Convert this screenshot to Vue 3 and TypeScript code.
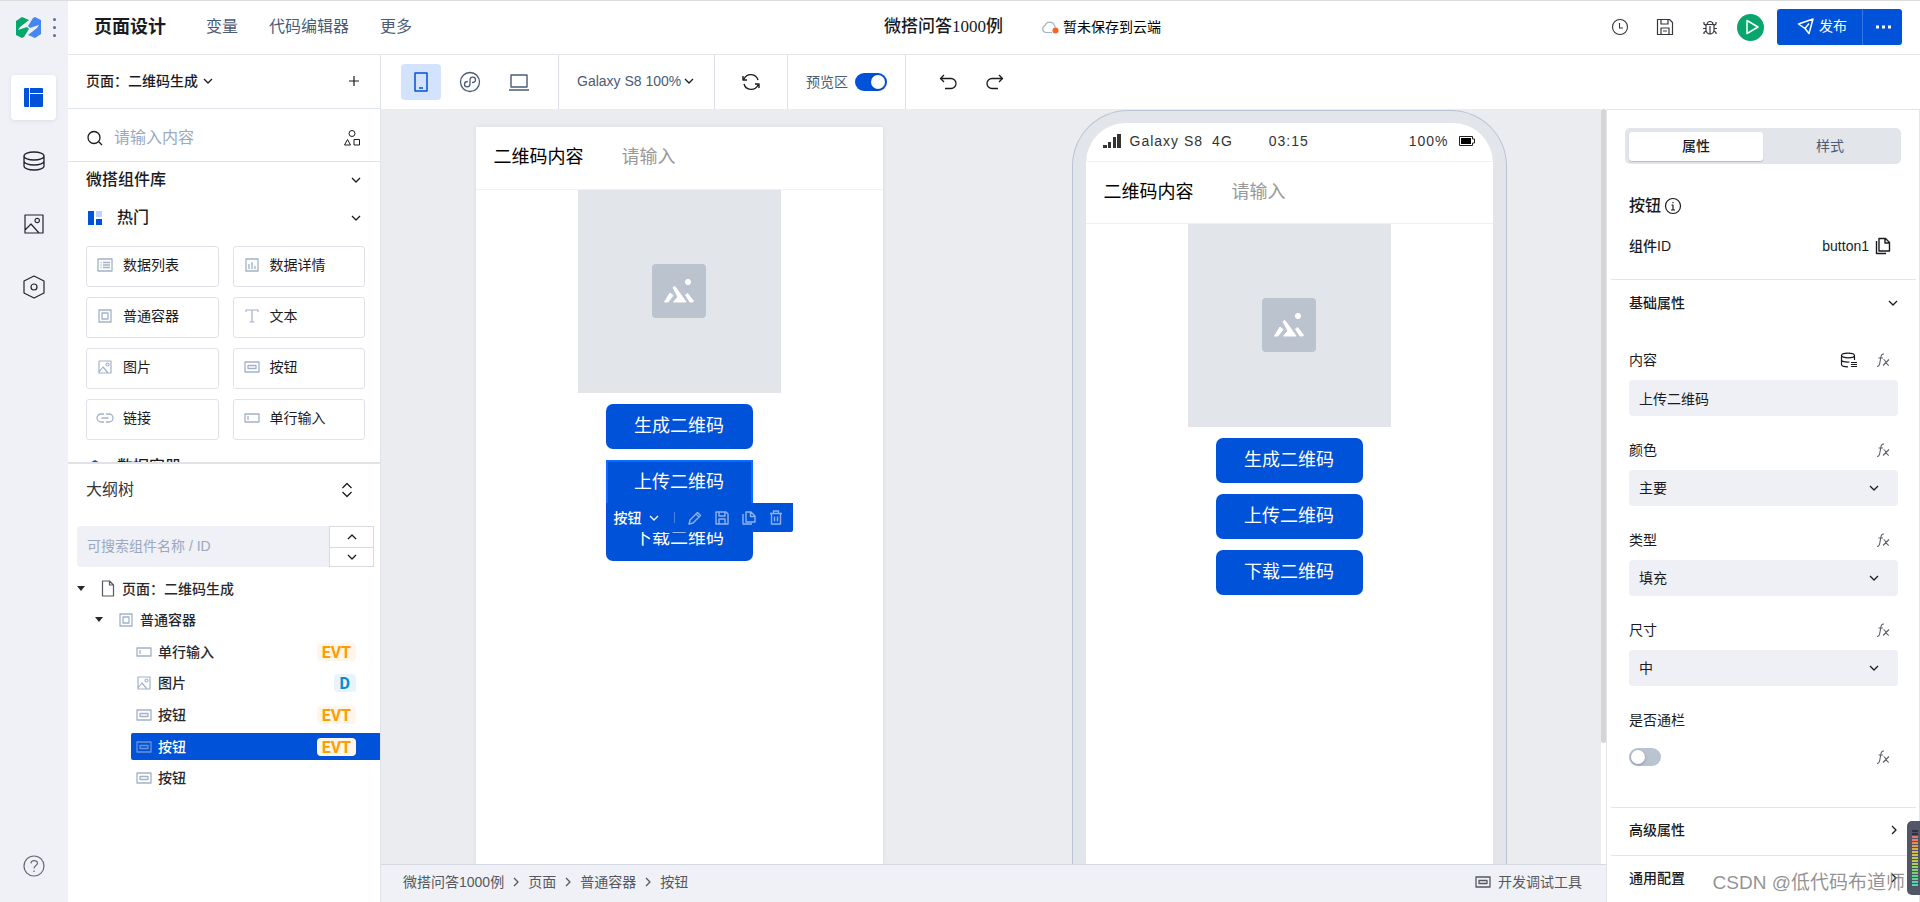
<script setup lang="ts">
import { h, ref } from 'vue'
import type { FunctionalComponent } from 'vue'

type Glyph = { w: number; h: number; d: string; fill?: string; sw?: number }

const glyphs: Record<string, Glyph> = {
  down: { w: 10, h: 8, d: 'M1 2l4 4 4-4', sw: 1.3 },
  up: { w: 10, h: 8, d: 'M1 6l4-4 4 4', sw: 1.3 },
  right: { w: 8, h: 10, d: 'M2 1l4 4-4 4', sw: 1.3 },
  plus: { w: 12, h: 12, d: 'M6 1v10M1 6h10', sw: 1.2 },
  database: {
    w: 22, h: 22, sw: 1.3,
    d: 'M1 6c0-2.300 4.500-4 10-4s10 1.700 10 4-4.500 4-10 4-10-1.700-10-4zM1 6v10c0 2.300 4.500 4 10 4s10-1.700 10-4V6M1 11c0 2.300 4.500 4 10 4s10-1.700 10-4',
  },
  picture: { w: 20, h: 20, d: 'M1 1h18v18H1zM1 16l6-6 8 9M11 6.500a2.200 2.200 0 1 0 4.400 0a2.200 2.200 0 1 0-4.400 0M15 19h4v-2', sw: 1.2 },
  hexagon: { w: 22, h: 24, d: 'M11 1l10 5v12l-10 5-10-5V6zM8 12a3 3 0 1 0 6 0a3 3 0 1 0-6 0', sw: 1.2 },
  help: { w: 22, h: 22, d: 'M1 11a10 10 0 1 0 20 0a10 10 0 1 0-20 0M8 8.500c0-4 6.500-3.800 6.500-.3C14.500 10.500 11 10.500 11 13.500M11 15.500v1.500', sw: 1.2 },
  search: { w: 16, h: 16, d: 'M1 7.500a6 6 0 1 0 12 0a6 6 0 1 0-12 0M11.500 11.500L15 15', sw: 1.3 },
  shapes: { w: 18, h: 18, d: 'M6 4.500a3 3 0 1 0 6 0a3 3 0 1 0-6 0M1.500 16L4.500 10.500L7.500 16zM11 10.500h5.500V16H11z', sw: 1 },
  list: { w: 16, h: 14, d: 'M1 1h14v12H1zM3.500 4.500h1M3.500 7h1M3.500 9.500h1M6 4.500h7M6 7h7M6 9.500h7', sw: 1.3 },
  chart: { w: 14, h: 14, d: 'M1 1h12v12H1zM4 6v5M7 4v7M10 8v3', sw: 1.3 },
  box: { w: 14, h: 14, d: 'M1 1h12v12H1zM4 4h6v6H4z', sw: 1.3 },
  text: { w: 14, h: 14, d: 'M1 3V1h12v2M7 1v12M4.500 13h5', sw: 1.2 },
  image: { w: 14, h: 14, d: 'M1 1h12v12H1zM1 12l4-5 5 6M8 4.500a1.500 1.500 0 1 0 3 0a1.500 1.500 0 1 0-3 0', sw: 1.2 },
  button: { w: 16, h: 12, d: 'M1 1h14v10H1zM4 4.500h8v3H4z', sw: 1.3 },
  link: { w: 18, h: 12, d: 'M8 2H5a4 4 0 0 0 0 8h3M10 2h3a4 4 0 0 1 0 8h-3M5.500 6h7', sw: 1.3 },
  field: { w: 16, h: 10, d: 'M1 1h14v8H1zM4 3v4', sw: 1.3 },
  updown: { w: 12, h: 16, d: 'M1.500 6L6 1.500L10.500 6M1.500 10L6 14.500L10.500 10', sw: 1.3 },
  file: { w: 14, h: 17, d: 'M1.500 1h7l4 4v11h-11zM8.500 1v4h4', sw: 1.2 },
  caret: { w: 10, h: 6, d: 'M1 0h8L5 5z', fill: 'currentColor', sw: 0 },
  phone: { w: 14, h: 20, d: 'M1 1h12v18H1zM5 16h4', sw: 1.5 },
  mini: { w: 22, h: 22, d: 'M1.500 11a9.500 9.500 0 1 0 19 0a9.500 9.500 0 1 0-19 0M13 11.500c3 0 3.500-1.700 3.500-2.700 0-1.600-1.200-2.600-2.700-2.600S11 7.300 11 9v4c0 1.700-1.200 2.800-2.800 2.800S5.500 14.800 5.500 13.200c0-1 .7-2.700 3.300-2.700', sw: 1.3 },
  laptop: { w: 20, h: 17, d: 'M2 1h16v12H2zM0 16h20', sw: 1.4 },
  refresh: { w: 20, h: 20, d: 'M3 7a7.500 7.500 0 0 1 14 1M17 13a7.500 7.500 0 0 1-14-1M2 4v4h4M18 16v-4h-4', sw: 1.4 },
  undo: { w: 18, h: 16, d: 'M5 1L1.500 4.500L5 8M1.500 4.500H12a5 5 0 0 1 0 10H6', sw: 1.3 },
  redo: { w: 18, h: 16, d: 'M13 1l3.500 3.500L13 8M16.500 4.500H6a5 5 0 0 0 0 10h6', sw: 1.3 },
  clock: { w: 18, h: 18, d: 'M1.500 9a7.500 7.500 0 1 0 15 0a7.500 7.500 0 1 0-15 0M8.500 5v5H12', sw: 1.1 },
  save: { w: 18, h: 18, d: 'M1.500 1.500h12l3 3v12h-15zM5 1.500V6h7V1.500M5 16.500V10h8v6.500M7 13h4', sw: 1.2 },
  bug: { w: 16, h: 18, d: 'M4 6.500h8V12a4 4 0 0 1-8 0zM5 6.500a3 3 0 0 1 6 0M8 8v8M4 7.500L2 6V4M12 7.500L14 6V4M4 10.500H1M12 10.500h3M4 13l-2 1.500V16M12 13l2 1.500V16', sw: 1.2 },
  play: { w: 14, h: 16, d: 'M2 1.500l11 6.500-11 6.500z', sw: 1.5 },
  plane: { w: 18, h: 18, d: 'M1.500 7L16 2l-4 14.500-4-5zM8 11.500L12 6.500M1.500 7L8 11.500', sw: 1.5 },
  more: { w: 16, h: 4, d: 'M1 .500h3v3H1zM7 .500h3v3H7zM13 .500h3v3h-3z', fill: 'currentColor', sw: 0 },
  info: { w: 18, h: 18, d: 'M1.500 9a7.500 7.500 0 1 0 15 0a7.500 7.500 0 1 0-15 0M9 5v1.200M7.500 8H9v5M7 13h4', sw: 1.2 },
  copy: { w: 16, h: 18, d: 'M4 1.500h6.500l4 4V14H4zM10 1.500V6h4.500M1.500 4v12.500H11', sw: 1.4 },
  duplicate: { w: 14, h: 14, d: 'M4 1h5l4 4v6H4zM8.500 1v4.500H13M1 3v10h9', sw: 1.4 },
  dataset: { w: 18, h: 16, d: 'M1.500 3.500c0-1.300 3-2.300 6.500-2.300s6.500 1 6.500 2.300-3 2.300-6.500 2.300-6.500-1-6.500-2.300zM1.500 3.500v9c0 1.400 3 2.300 6.500 2.300M14.500 3.500V8M1.500 8c0 1.300 3 2.300 8 2M11 10.500h6M11 12.500h6M11 14.500h6', sw: 1.2 },
  fx: { w: 14, h: 16, d: 'M1 14.500c1.700 0 2.200-.6 2.600-2.500L5 4.500C5.400 2.500 6 1.800 8 2M2.500 6h4.500M7.500 7.500c2 0 3 6 5.500 6M13 7.500L7 13.500', sw: 1.1 },
  pencil: { w: 14, h: 14, d: 'M2 9l7.500-7.500 3 3L5 12l-4 1zM8 3l3 3', sw: 1.4 },
  disk: { w: 14, h: 14, d: 'M1 1h10l2 2v10H1zM4 1v4h6V1M4 13V8h6v5', sw: 1.4 },
  trash: { w: 14, h: 15, d: 'M1 3.500h12M4.500 3.500V1h5v2.500M2.500 3.500V14h9V3.500M5.500 6.500v5M8.500 6.500v5', sw: 1.4 },
}

const Icon: FunctionalComponent<{ n: string }> = (p) => {
  const g = glyphs[p.n]
  return h(
    'svg',
    {
      width: g.w, height: g.h, viewBox: `0 0 ${g.w} ${g.h}`, 'aria-hidden': 'true',
      fill: g.fill ?? 'none', stroke: 'currentColor', 'stroke-width': g.sw ?? 1.2, 'stroke-linejoin': 'round',
    },
    [h('path', { d: g.d })],
  )
}
Icon.props = ['n']

const menus = ['变量', '代码编辑器', '更多']
const components = [
  { icon: 'list', name: '数据列表' },
  { icon: 'chart', name: '数据详情' },
  { icon: 'box', name: '普通容器' },
  { icon: 'text', name: '文本' },
  { icon: 'image', name: '图片' },
  { icon: 'button', name: '按钮' },
  { icon: 'link', name: '链接' },
  { icon: 'field', name: '单行输入' },
]
const tree = [
  { level: 0, icon: 'file', name: '页面：二维码生成', open: true, tag: '' },
  { level: 1, icon: 'box', name: '普通容器', open: true, tag: '' },
  { level: 2, icon: 'field', name: '单行输入', open: false, tag: 'EVT' },
  { level: 2, icon: 'image', name: '图片', open: false, tag: 'D' },
  { level: 2, icon: 'button', name: '按钮', open: false, tag: 'EVT' },
  { level: 2, icon: 'button', name: '按钮', open: false, tag: 'EVT' },
  { level: 2, icon: 'button', name: '按钮', open: false, tag: '' },
]
const selected = ref(5)
const crumbs = ['微搭问答1000例', '页面', '普通容器', '按钮']
const actions = ['生成二维码', '上传二维码', '下载二维码']
const selects = [
  { id: 'color', label: '颜色', value: '主要' },
  { id: 'kind', label: '类型', value: '填充' },
  { id: 'size', label: '尺寸', value: '中' },
]
const content = ref('上传二维码')
const preview = ref(true)
const block = ref(false)
</script>

<template>
  <div class="app">
    <aside class="rail">
      <div class="brand">
        <svg width="25" height="21" viewBox="0 0 25 21" aria-hidden="true">
          <path d="M0 4L6 0l7 3-9 7-2 3 9-3 2 2-5 8-2 1-6-3z" fill="#07a66d" />
          <path d="M25 17l-6 4-7-3 9-7 2-3-9 3-2-2 5-8 2-1 6 3z" fill="#4587f0" />
        </svg>
        <button class="dots" aria-label="菜单"><i></i><i></i><i></i></button>
      </div>
      <nav class="rail-nav">
        <button class="rail-item active" aria-label="页面">
          <svg width="20" height="20" viewBox="0 0 20 20" aria-hidden="true">
            <path d="M1 0h4v19H1a1 1 0 0 1-1-1V1a1 1 0 0 1 1-1zM6 0h12a1 1 0 0 1 1 1v4H6zM6 6h13v12a1 1 0 0 1-1 1H6z" fill="#0052d9" />
          </svg>
        </button>
        <button class="rail-item" aria-label="数据"><Icon n="database" /></button>
        <button class="rail-item" aria-label="素材"><Icon n="picture" /></button>
        <button class="rail-item" aria-label="设置"><Icon n="hexagon" /></button>
      </nav>
      <button class="rail-help" aria-label="帮助"><Icon n="help" /></button>
    </aside>

    <header class="header">
      <div class="header-left">
        <h1>页面设计</h1>
        <nav class="menu"><a v-for="m in menus" :key="m" href="#">{{ m }}</a></nav>
      </div>
      <div class="header-mid">
        <span class="project">微搭问答1000例</span>
        <span class="cloud">
          <svg width="18" height="14" viewBox="0 0 18 14" aria-hidden="true">
            <path d="M11 12.500H4.500a3.700 3.700 0 0 1-.5-7 5 5 0 0 1 9.500 0l1 2" fill="none" stroke="#a3b1cb" stroke-width="1.200" />
            <circle cx="14.500" cy="10.500" r="3" fill="#f26522" />
          </svg>
          暂未保存到云端
        </span>
      </div>
      <div class="header-right">
        <button class="tool" aria-label="历史"><Icon n="clock" /></button>
        <button class="tool" aria-label="保存"><Icon n="save" /></button>
        <button class="tool" aria-label="调试"><Icon n="bug" /></button>
        <button class="run" aria-label="运行"><Icon n="play" /></button>
        <div class="publish">
          <button class="publish-main"><Icon n="plane" />发布</button>
          <button class="publish-more" aria-label="更多发布选项"><Icon n="more" /></button>
        </div>
      </div>
    </header>

    <section class="left">
      <div class="page-bar">
        <button class="page-name">页面：二维码生成<Icon n="down" /></button>
        <button class="ghost" aria-label="新建"><Icon n="plus" /></button>
      </div>
      <div class="search">
        <Icon n="search" />
        <input type="text" placeholder="请输入内容" aria-label="搜索组件" />
        <Icon n="shapes" />
      </div>
      <div class="library">
        <button class="lib-head">微搭组件库<Icon n="down" /></button>
        <button class="lib-group">
          <svg width="14" height="14" viewBox="0 0 14 14" aria-hidden="true">
            <path d="M0 0h6v14H0zM8 8h6v6H8z" fill="#0052d9" /><path d="M8 0h6v6H8z" fill="#bcd3fb" />
          </svg>
          <span>热门</span><Icon n="down" />
        </button>
        <div class="cards">
          <button v-for="c in components" :key="c.name" class="card">
            <span class="card-icon"><Icon :n="c.icon" /></span>{{ c.name }}
          </button>
        </div>
        <button class="lib-group">
          <svg width="14" height="14" viewBox="0 0 14 14" aria-hidden="true">
            <path d="M7 0l7 4-7 4-7-4z" fill="#0052d9" /><path d="M0 7l7 4 7-4v3l-7 4-7-4z" fill="#bcd3fb" />
          </svg>
          <span>数据容器</span><Icon n="down" />
        </button>
      </div>
      <div class="outline">
        <div class="outline-head"><h2>大纲树</h2><button class="ghost" aria-label="展开"><Icon n="updown" /></button></div>
        <div class="outline-search">
          <input type="text" placeholder="可搜索组件名称 / ID" aria-label="搜索大纲" />
          <div class="stepper">
            <button aria-label="上一个"><Icon n="up" /></button>
            <button aria-label="下一个"><Icon n="down" /></button>
          </div>
        </div>
        <ul class="tree">
          <li v-for="(t, i) in tree" :key="i" :class="['lv' + t.level, { on: i === selected }]">
            <button class="node" @click="selected = i">
              <Icon v-if="t.open" n="caret" class="caret" />
              <span class="node-icon"><Icon :n="t.icon" /></span>
              <span class="node-name">{{ t.name }}</span>
              <span v-if="t.tag" :class="['tag', t.tag === 'D' ? 'tag-d' : 'tag-evt']">{{ t.tag }}</span>
            </button>
          </li>
        </ul>
      </div>
    </section>

    <div class="toolbar">
      <div class="group devices">
        <button class="device active" aria-label="手机"><Icon n="phone" /></button>
        <button class="device" aria-label="小程序"><Icon n="mini" /></button>
        <button class="device" aria-label="电脑"><Icon n="laptop" /></button>
      </div>
      <div class="group model"><button>Galaxy S8 100%<Icon n="down" /></button></div>
      <div class="group reload"><button class="ghost" aria-label="刷新"><Icon n="refresh" /></button></div>
      <label class="group preview">预览区<input v-model="preview" class="switch" type="checkbox" /></label>
      <div class="group history">
        <button class="ghost" aria-label="撤销"><Icon n="undo" /></button>
        <button class="ghost" aria-label="重做"><Icon n="redo" /></button>
      </div>
    </div>

    <main class="stage">
      <div class="canvas">
        <div class="frame">
          <div class="form-row"><label for="qr-edit">二维码内容</label><input id="qr-edit" type="text" placeholder="请输入" /></div>
          <div class="placeholder">
            <svg width="54" height="54" viewBox="0 0 54 54" aria-hidden="true">
              <rect width="54" height="54" rx="4" fill="#bbc3cf" />
              <g fill="#fff" stroke="#fff" stroke-width="1" stroke-linejoin="round">
                <circle cx="36" cy="18" r="2.600" /><path d="M12.500 38l5.500-9 3 2.500-5 6.500h-3zM21 23.500l2-1 11 15.500H21.500l4.500-5zM33.500 31l2-1.500 6 7.500-1 1h-2.500z" />
              </g>
            </svg>
          </div>
          <div class="actions">
            <div v-for="(a, i) in actions" :key="a" :class="['slot', { picked: i === 1 }]">
              <button class="primary">{{ a }}</button>
              <div v-if="i === 1" class="float-bar">
                <button class="float-name">按钮<Icon n="down" /></button>
                <i class="bar-sep"></i>
                <button aria-label="编辑"><Icon n="pencil" /></button>
                <button aria-label="保存组件"><Icon n="disk" /></button>
                <button aria-label="复制组件"><Icon n="duplicate" /></button>
                <button aria-label="删除组件"><Icon n="trash" /></button>
              </div>
            </div>
          </div>
        </div>
        <div class="device-shell">
          <div class="screen">
            <div class="status">
              <svg width="18" height="14" viewBox="0 0 18 14" aria-hidden="true"><path d="M0 11h4v3H0zM5 8h3v6H5zM10 3h3v11h-3zM14 0h4v14h-4z" fill="#333" /></svg>
              <span class="carrier">Galaxy S8</span><span>4G</span><span class="time">03:15</span>
              <span class="power">100%</span>
              <svg width="16" height="10" viewBox="0 0 16 10" aria-hidden="true"><path d="M.500.500h13V3H15.500v4h-2v2.500H.500z" fill="#fff" stroke="#222" /><path d="M2 2h10v6H2z" /></svg>
            </div>
            <div class="form-row"><label for="qr-live">二维码内容</label><input id="qr-live" type="text" placeholder="请输入" /></div>
            <div class="placeholder">
              <svg width="54" height="54" viewBox="0 0 54 54" aria-hidden="true">
                <rect width="54" height="54" rx="4" fill="#bbc3cf" />
                <g fill="#fff" stroke="#fff" stroke-width="1" stroke-linejoin="round">
                  <circle cx="36" cy="18" r="2.600" /><path d="M12.500 38l5.500-9 3 2.500-5 6.500h-3zM21 23.500l2-1 11 15.500H21.500l4.500-5zM33.500 31l2-1.500 6 7.500-1 1h-2.500z" />
                </g>
              </svg>
            </div>
            <div class="actions"><button v-for="a in actions" :key="a" class="primary">{{ a }}</button></div>
          </div>
        </div>
      </div>
      <div class="track"><div class="thumb"></div></div>
      <footer class="footer">
        <nav class="crumbs">
          <template v-for="(c, i) in crumbs" :key="c"><Icon v-if="i" n="right" /><a href="#">{{ c }}</a></template>
        </nav>
        <button class="devtools"><Icon n="button" />开发调试工具</button>
      </footer>
    </main>

    <aside class="right">
      <div class="tabs" role="tablist">
        <button role="tab" aria-selected="true" class="tab active">属性</button>
        <button role="tab" aria-selected="false" class="tab">样式</button>
      </div>
      <div class="widget">
        <h2>按钮<Icon n="info" /></h2>
        <div class="widget-id"><strong>组件ID</strong><span>button1</span><button class="ghost" aria-label="复制ID"><Icon n="copy" /></button></div>
      </div>
      <button class="fold">基础属性<Icon n="down" /></button>
      <div class="fields">
        <div class="field">
          <div class="field-head"><label for="content">内容</label><button class="ghost" aria-label="绑定数据"><Icon n="dataset" /></button><button class="ghost fx" aria-label="表达式"><Icon n="fx" /></button></div>
          <input id="content" v-model="content" class="control" type="text" />
        </div>
        <div v-for="s in selects" :key="s.id" class="field">
          <div class="field-head"><label :for="s.id">{{ s.label }}</label><button class="ghost fx" aria-label="表达式"><Icon n="fx" /></button></div>
          <div class="select-wrap"><select :id="s.id" class="control"><option>{{ s.value }}</option></select><Icon n="down" /></div>
        </div>
        <div class="field">
          <div class="field-head"><label for="block">是否通栏</label></div>
          <div class="toggle-row"><input id="block" v-model="block" class="switch" type="checkbox" /><button class="ghost fx" aria-label="表达式"><Icon n="fx" /></button></div>
        </div>
      </div>
      <button class="fold closed">高级属性<Icon n="right" /></button>
      <button class="fold closed">通用配置<Icon n="right" /></button>
    </aside>

    <div class="watermark">CSDN @低代码布道师</div>
    <div class="meter"><div class="meter-scale"></div></div>
  </div>
</template>

<style>
body { margin: 0; }
</style>

<style scoped>
.app {
  position: relative;
  display: grid;
  grid-template-columns: 68px 313px minmax(0, 1fr) 314px;
  grid-template-rows: 55px 54px minmax(0, 1fr);
  height: 100vh;
  overflow: hidden;
  box-sizing: border-box;
  background: #fff;
  color: #191b1f;
  font: 14px/20px "Liberation Sans", "Noto Sans CJK SC", sans-serif;
}
.app *, .app *::before { box-sizing: border-box; }
.app svg { flex: none; display: block; }
button { border: 0; background: none; padding: 0; margin: 0; font: inherit; color: inherit; display: flex; align-items: center; cursor: pointer; }
input, select { font: inherit; color: inherit; border: 0; outline: 0; background: none; padding: 0; margin: 0; min-width: 0; border-radius: 0; }
a { color: inherit; text-decoration: none; }
h1, h2, ul { margin: 0; padding: 0; list-style: none; font-weight: 500; }
.ghost { justify-content: center; }

.rail { grid-row: 1 / -1; display: flex; flex-direction: column; align-items: center; padding-right: 1px; background: #eff1f6; border-top: 1px solid #dcdcdc; }
.brand { display: flex; align-items: center; gap: 12px; height: 55px; padding: 0 0 2px 4px; }
.dots { flex-direction: column; gap: 5px; }
.dots i { width: 3px; height: 3px; border-radius: 2px; background: #5a6b8c; }
.rail-nav { display: flex; flex-direction: column; gap: 18px; margin-top: 19px; }
.rail-item { width: 45px; height: 45px; justify-content: center; border-radius: 4px; color: #22252b; }
.rail-item.active { background: #fff; box-shadow: 0 1px 4px rgba(30, 50, 90, 0.1); }
.rail-help { margin-top: auto; margin-bottom: 25px; color: #666a70; }

.header { grid-column: 2 / -1; display: grid; grid-template-columns: 1fr auto 1fr; align-items: center; border-top: 1px solid #dcdcdc; border-bottom: 1px solid #e4e6ec; padding-bottom: 1px; }
.header-left { display: flex; align-items: center; padding-left: 26px; }
h1 { font-size: 18px; line-height: 24px; font-weight: 700; }
.menu { display: flex; gap: 31px; margin-left: 40px; font-size: 16px; color: #4b5b76; }
.header-mid { display: flex; align-items: center; gap: 38px; margin-left: 57px; }
.project { font-family: "Liberation Serif", "Noto Sans CJK SC", serif; font-size: 17px; font-weight: 500; }
.cloud { display: flex; align-items: center; gap: 4px; color: #000; }
.header-right { display: flex; align-items: center; justify-content: flex-end; padding-right: 18px; }
.tool { width: 45px; justify-content: center; color: #33363c; }
.run { width: 27px; height: 27px; justify-content: center; border-radius: 50%; background: #07a66d; color: #fff; margin-left: 5px; padding-left: 3px; }
.publish { display: flex; height: 36px; margin-left: 13px; border-radius: 3px; overflow: hidden; background: #0052d9; color: #fff; }
.publish-main { width: 86px; gap: 4px; padding: 0 0 2px 20px; border-right: 1px solid #3876e0; }
.publish-more { width: 39px; justify-content: center; }

.left { grid-column: 2; grid-row: 2 / -1; display: flex; flex-direction: column; border-right: 1px solid #e0e3e9; min-height: 0; }
.page-bar { display: flex; align-items: center; justify-content: space-between; height: 54px; padding: 0 20px 2px 18px; border-bottom: 1px solid #e0e3e9; }
.page-name { gap: 5px; font-weight: 500; }
.search { display: flex; align-items: center; height: 53px; padding: 5px 19px 0 19px; border-bottom: 1px solid #e0e3e9; }
.search input { flex: 1; margin-left: 11px; font-size: 16px; }
.search input::placeholder, .outline-search input::placeholder { color: #9aa8c0; opacity: 1; }
.library { height: 300px; overflow: hidden; padding: 0 15px 0 18px; }
.lib-head { width: 100%; justify-content: space-between; height: 35px; padding-right: 4px; font-size: 16px; font-weight: 500; }
.lib-group { width: 100%; height: 41px; padding: 0 4px 0 2px; font-size: 16px; font-weight: 500; }
.lib-group span { flex: 1; text-align: left; padding-left: 15px; }
.cards { display: grid; grid-template-columns: 1fr 1fr; gap: 10px 14px; margin: 8px 0 6px; }
.card { height: 41px; border: 1px solid #dfe3e9; border-radius: 3px; padding: 0 0 3px 9px; }
.card-icon { width: 18px; margin-right: 9px; display: flex; justify-content: center; color: #a3b1c8; }
.outline { flex: 1; border-top: 2px solid #e0e2e6; }
.outline-head { display: flex; align-items: center; justify-content: space-between; height: 52px; padding: 0 27px 0 18px; }
.outline-head h2 { font-size: 16px; font-weight: 400; color: #33363c; }
.outline-search { display: flex; height: 41px; margin: 10px 6px 0 9px; }
.outline-search input { flex: 1; background: #eff1f6; border-radius: 4px 0 0 4px; padding: 0 0 2px 10px; }
.stepper { width: 45px; display: grid; grid-template-rows: 1fr 1fr; border: 1px solid #d9dadd; }
.stepper button { justify-content: center; }
.stepper button + button { border-top: 1px solid #d9dadd; }
.tree { display: grid; grid-auto-rows: 1fr; align-items: center; height: 221px; margin-top: 6px; }
.node { width: 100%; height: 27px; padding-right: 24px; color: #26292e; }
.lv0 { padding-left: 8px; }
.lv1 { padding-left: 26px; }
.lv2 { padding-left: 63px; }
.caret { margin-right: 13px; }
.node-icon { width: 18px; margin-right: 5px; display: flex; justify-content: center; color: #a3b1c8; }
.lv0 .node-icon { color: #55585e; }
.lv2 .node { padding-left: 4px; border-radius: 2px 0 0 2px; }
.node-name { flex: 1; text-align: left; }
.on .node { background: #0052d9; color: #fff; font-weight: 500; }
.on .node-icon { color: #6f93d4; }
.tag { height: 18px; border-radius: 4px; padding: 0 5px; font: 700 16px/20px Roboto, sans-serif; }
.tag-evt { background: #fff5e8; color: #ff9d00; }
.tag-d { background: #e8f4fc; color: #0a8ad6; padding: 0 6px; }

.toolbar { grid-column: 3 / -1; grid-row: 2; display: flex; }
.group { display: flex; align-items: center; border-right: 1px solid #dcdfe8; }
.devices { width: 178px; padding-left: 20px; color: #4b5b76; }
.device { width: 40px; height: 36px; justify-content: center; border-radius: 4px; }
.device + .device { margin-left: 9px; }
.device.active { background: #d3e3fd; color: #0052d9; }
.model { width: 156px; padding: 0 0 2px 18px; color: #4b5b76; }
.model button { gap: 3px; }
.model svg { color: #191b1f; }
.reload { width: 73px; justify-content: center; }
.preview { width: 118px; padding-left: 18px; gap: 7px; color: #4b5b76; }
.history { border: 0; padding-left: 33px; gap: 29px; }
.switch { appearance: none; width: 32px; height: 18px; border-radius: 9px; background: #bac3d0; display: flex; align-items: center; padding: 0 2px; cursor: pointer; }
.switch::before { content: ""; width: 14px; height: 14px; border-radius: 50%; background: #fff; box-shadow: 0 1px 3px rgba(0, 20, 60, 0.3); }
.switch:checked { background: #0052d9; justify-content: flex-end; }

.stage { grid-column: 3; grid-row: 3; display: grid; grid-template-columns: minmax(0, 1fr) 5px; grid-template-rows: minmax(0, 1fr) 38px; }
.canvas { display: flex; justify-content: space-around; overflow: hidden; background: #ebecf0; }
.track { background: #fff; }
.thumb { height: 84%; background: #d5d5d5; border-radius: 3px; }
.frame { width: 407px; margin-top: 18px; background: #fff; box-shadow: 0 0 5px rgba(0, 0, 0, 0.08); }
.form-row { display: flex; align-items: center; height: 63px; padding: 0 18px 2px; border-bottom: 1px solid #f0f0f1; font-size: 18px; line-height: 26px; color: #000; }
.form-row input { flex: 1; margin-left: 38px; }
.form-row input::placeholder { color: #999; opacity: 1; }
.placeholder { width: 203px; height: 203px; margin: 0 auto; padding-bottom: 2px; display: flex; align-items: center; justify-content: center; background: #e2e5ea; }
.actions { display: flex; flex-direction: column; align-items: center; gap: 11px; margin-top: 11px; }
.primary { width: 147px; height: 45px; justify-content: center; border-radius: 7px; background: #0052d9; color: #fff; font-size: 18px; padding-bottom: 1px; }
.slot { position: relative; }
.picked .primary { border: 2px solid #0a6cff; border-radius: 0; }
.float-bar { position: absolute; z-index: 1; left: 0; top: 43px; display: flex; align-items: center; gap: 13px; width: 187px; height: 29px; padding: 0 10px 0 8px; background: #0052d9; color: #8fb2ee; border-radius: 0 0 2px 0; }
.float-name { gap: 7px; margin-right: auto; color: #fff; font-weight: 500; }
.bar-sep { width: 1px; height: 11px; background: #4a80de; }
.device-shell { width: 435px; margin-top: 1px; padding: 12px 13px 0; border: 1px solid #b9c4d3; border-bottom: 0; border-radius: 56px 56px 0 0; background: #e2e6eb; }
.screen { height: 100%; background: #fff; border-radius: 40px 40px 0 0; }
.status { display: flex; align-items: center; height: 39px; padding: 0 18px 2px 17px; border-bottom: 1px solid #f0f0f1; color: #333; letter-spacing: 1px; }
.carrier { margin: 0 9px; }
.time { margin-left: 36px; }
.power { margin-left: auto; margin-right: 10px; }
.screen .form-row { height: 62px; }
.footer { grid-column: 1 / -1; display: flex; align-items: center; justify-content: space-between; padding: 0 24px 3px 22px; background: #eff1f6; border-top: 1px solid #d5d9e2; color: #55585e; }
.crumbs { display: flex; align-items: center; gap: 8px; }
.devtools { gap: 7px; }

.right { grid-column: 4; grid-row: 3; display: flex; flex-direction: column; overflow: hidden; border: 1px solid #e2e4e8; border-bottom: 0; padding: 0 3px 0 4px; }
.tabs { display: flex; height: 36px; flex: none; margin: 18px 15px 0 14px; padding: 4px; border-radius: 5px; background: #e2e5ea; }
.tab { flex: 1; justify-content: center; border-radius: 3px; color: #4b5b76; height: 29px; padding-bottom: 2px; }
.tab.active { background: #fff; color: #191b1f; font-weight: 500; box-shadow: 0 1px 1px #b4bcca; }
.widget { padding: 28px 25px 21px 18px; border-bottom: 1px solid #e2e4e8; }
.widget h2 { display: flex; align-items: center; gap: 3px; height: 28px; font-size: 16px; }
.widget-id { display: flex; align-items: center; gap: 6px; height: 24px; margin-top: 14px; }
.widget-id strong { flex: 1; }
.widget-id strong, .fold { font-weight: 500; }
.fold { justify-content: space-between; height: 46px; flex: none; padding: 0 18px; }
.fields { padding: 20px 18px 33px; }
.field { margin-bottom: 20px; }
.field:last-child { margin-bottom: 0; }
.field-head { display: flex; align-items: center; height: 28px; margin-bottom: 6px; }
.field-head label { margin-right: auto; }
.fx { width: 14px; margin: 0 8px 0 18px; color: #5c6068; }
.control { width: 100%; height: 36px; display: block; border-radius: 4px; background: #eff0f5; padding: 0 10px; appearance: none; }
.select-wrap { display: grid; align-items: center; }
.select-wrap > * { grid-area: 1 / 1; }
.select-wrap svg { justify-self: end; margin-right: 19px; pointer-events: none; }
.toggle-row { display: flex; align-items: center; justify-content: space-between; height: 34px; }
.closed { height: 48px; padding-bottom: 3px; border-top: 1px solid #e2e4e8; }

.watermark { position: absolute; right: 15px; bottom: 4px; font-size: 19px; line-height: 30px; color: rgba(110, 110, 110, 0.75); pointer-events: none; }
.meter { position: absolute; right: 0; bottom: 7px; width: 13px; height: 74px; padding: 9px 2px 8px 5px; border-radius: 5px 0 0 5px; background: #515766; }
.meter-scale { height: 100%; background: repeating-linear-gradient(transparent 0 2px, #515766 2px 3px), linear-gradient(#2f3340 0 8%, #e8707a 10%, #e58c50 22%, #d8c04a 40%, #a3cf60 62%, #5fcf8f 82%, #4fd8c0); }
</style>
